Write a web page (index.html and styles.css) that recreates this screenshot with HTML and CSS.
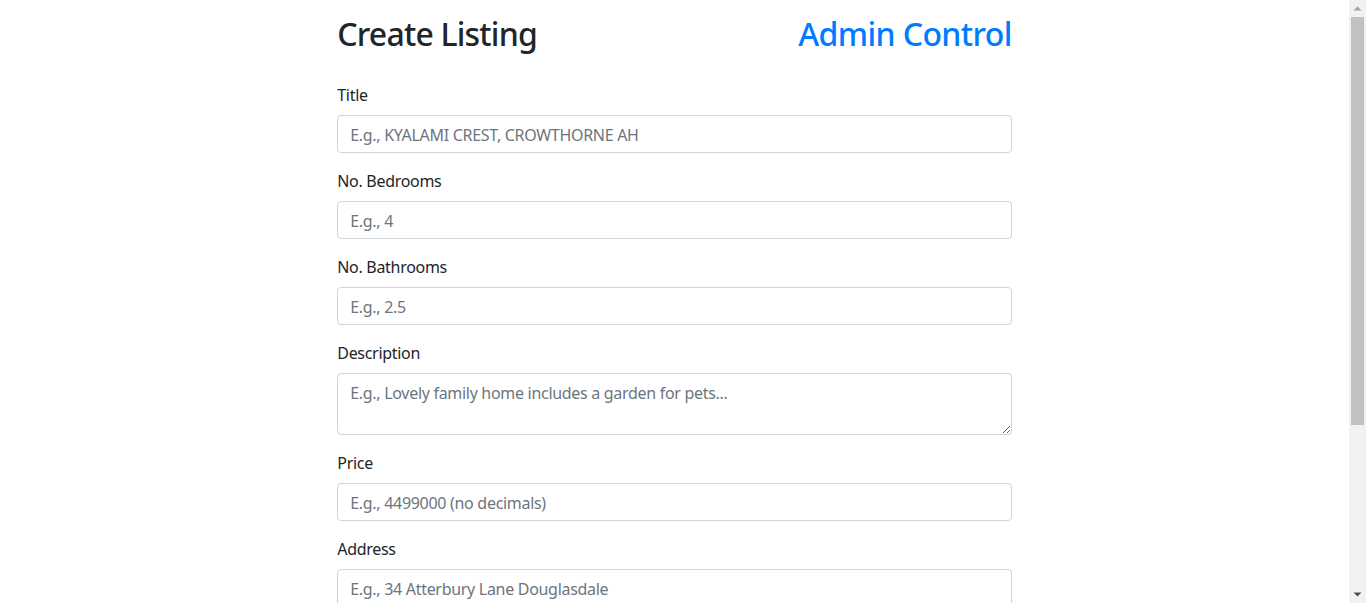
FILE: index.html
```html
<!DOCTYPE html>
<html lang="en">
<head>
<meta charset="utf-8">
<title>Create Listing</title>
<link rel="stylesheet" href="styles.css">
</head>
<body>
<main class="page">
  <header class="page-header">
    <h2 class="page-title">Create Listing</h2>
    <a class="admin-link" href="#">Admin Control</a>
  </header>
  <form class="listing-form">
    <div class="form-group">
      <label for="title">Title</label>
      <input id="title" class="form-control" type="text" placeholder="E.g., KYALAMI CREST, CROWTHORNE AH">
    </div>
    <div class="form-group">
      <label for="bedrooms">No. Bedrooms</label>
      <input id="bedrooms" class="form-control" type="text" placeholder="E.g., 4">
    </div>
    <div class="form-group">
      <label for="bathrooms">No. Bathrooms</label>
      <input id="bathrooms" class="form-control" type="text" placeholder="E.g., 2.5">
    </div>
    <div class="form-group">
      <label for="description">Description</label>
      <textarea id="description" class="form-control textarea" rows="2" placeholder="E.g., Lovely family home includes a garden for pets..."></textarea>
    </div>
    <div class="form-group">
      <label for="price">Price</label>
      <input id="price" class="form-control" type="text" placeholder="E.g., 4499000 (no decimals)">
    </div>
    <div class="form-group">
      <label for="address">Address</label>
      <input id="address" class="form-control" type="text" placeholder="E.g., 34 Atterbury Lane Douglasdale">
    </div>
    <div class="form-group">
      <label for="city">City</label>
      <input id="city" class="form-control" type="text" placeholder="E.g., Johannesburg">
    </div>
    <div class="form-group">
      <label for="image">Image</label>
      <input id="image" class="form-control" type="text" placeholder="Image URL">
    </div>
    <button class="btn" type="submit">Submit</button>
  </form>
</main>
<div class="fake-scrollbar" aria-hidden="true">
  <div class="sb-btn">
    <svg width="17" height="17" viewBox="0 0 17 17"><path d="M4.5 10.5 L8.5 6.5 L12.5 10.5 Z" fill="#a3a3a3"/></svg>
  </div>
  <div class="sb-track">
    <div class="sb-thumb"></div>
  </div>
  <div class="sb-btn">
    <svg width="17" height="17" viewBox="0 0 17 17"><path d="M4.5 6.5 L12.5 6.5 L8.5 10.5 Z" fill="#505050"/></svg>
  </div>
</div>
</body>
</html>
```

FILE: styles.css
```css
html, body {
  margin: 0;
  padding: 0;
  background: #fff;
}
body {
  padding-right: 17px;
  font-family: "Noto Sans", "Open Sans", "Liberation Sans", sans-serif;
  font-size: 16px;
  line-height: 1.5;
  color: #212529;
  letter-spacing: -0.3px;
}
.page {
  width: 50%;
  margin: 0 auto;
  padding: 15px 0 0;
}
.page-header {
  display: flex;
  justify-content: space-between;
  align-items: center;
  height: 38px;
  margin-bottom: 30px;
}
.page-title {
  margin: 0;
  font-size: 32px;
  font-weight: 500;
  line-height: 1.2;
  color: #212529;
  letter-spacing: -0.8px;
}
.admin-link {
  font-size: 32px;
  font-weight: 500;
  line-height: 1.2;
  color: #007bff;
  text-decoration: none;
  letter-spacing: -0.6px;
}
.form-group {
  margin-bottom: 16px;
}
.form-group label {
  display: block;
  margin-bottom: 8px;
  line-height: 24px;
}
.form-control {
  display: block;
  box-sizing: border-box;
  width: 100%;
  height: 38px;
  padding: 7px 12px 5px;
  font-family: inherit;
  font-size: 16px;
  letter-spacing: -0.3px;
  line-height: 24px;
  color: #495057;
  background: #fff;
  border: 1px solid #ced4da;
  border-radius: 4px;
  margin: 0;
}
.form-control::placeholder {
  color: #6c757d;
  opacity: 1;
}
.textarea {
  height: 62px;
  resize: vertical;
}
.btn {
  display: block;
  height: 38px;
  font-family: inherit;
  font-size: 16px;
  line-height: 24px;
  padding: 6px 12px;
  color: #fff;
  background: #007bff;
  border: 1px solid #007bff;
  border-radius: 4px;
}

/* simulated classic scrollbar */
.fake-scrollbar {
  position: fixed;
  top: 0;
  right: 0;
  width: 17px;
  height: 100vh;
  display: flex;
  flex-direction: column;
  background: #f1f1f1;
}
.sb-btn {
  height: 17px;
  flex: none;
}
.sb-btn svg {
  display: block;
}
.sb-track {
  flex: 1;
  padding: 0 2px;
}
.sb-thumb {
  height: 408px;
  background: #c1c1c1;
}
```
